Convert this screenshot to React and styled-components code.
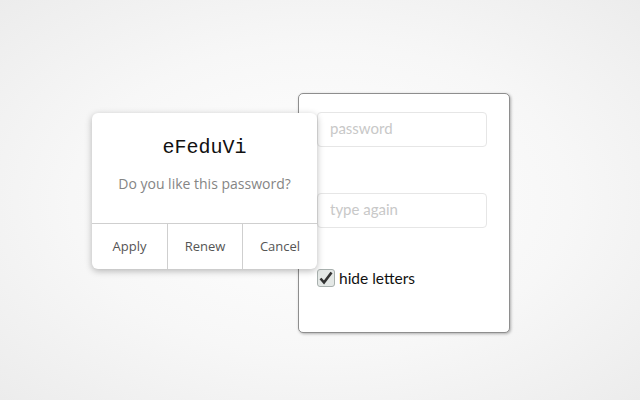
import React from "react";
import styled, { createGlobalStyle } from "styled-components";

const Global = createGlobalStyle`
  html, body { margin: 0; padding: 0; height: 100%; }
  body {
    background: radial-gradient(ellipse at 50% 50%, #ffffff 0%, #f7f7f7 55%, #ececec 100%);
    font-family: "Open Sans", sans-serif;
  }
`;

const Stage = styled.div`
  width: 640px;
  height: 400px;
  box-sizing: border-box;
  padding: 93px 0 0 298px;
  display: flex;
  align-items: flex-start;
`;

const FormPanel = styled.div`
  position: relative;
  width: 212px;
  height: 240px;
  box-sizing: border-box;
  background: #fff;
  border: 1px solid #8e8e8e;
  border-radius: 5px;
  box-shadow: 1px 1px 3px rgba(0, 0, 0, 0.3);
  padding: 18px 0 0 18px;
  display: flex;
  flex-direction: column;
`;

const Field = styled.input`
  width: 170px;
  height: 35px;
  box-sizing: border-box;
  border: 1px solid #e6e6e6;
  border-radius: 4px;
  padding: 0 12px 3px;
  margin-bottom: ${(p) => p.$gap}px;
  font-family: Lato, sans-serif;
  font-size: 15px;
  color: #333;
  outline: none;
  &::placeholder { color: #c8c8c8; }
`;

const CheckRow = styled.label`
  display: flex;
  align-items: center;
  gap: 4px;
  font-family: Lato, sans-serif;
  font-size: 15.5px;
  line-height: 18px;
  color: #111;
`;

const CheckBox = styled.span`
  width: 18px;
  height: 18px;
  box-sizing: border-box;
  border: 1px solid #a8b0ae;
  border-radius: 3px;
  background: #e4e8e6;
  display: flex;
  align-items: center;
  justify-content: center;
`;

const Dialog = styled.div`
  position: absolute;
  left: -207px;
  top: 19px;
  width: 225px;
  height: 156px;
  box-sizing: border-box;
  background: #fff;
  border-radius: 6px;
  box-shadow: 0 2px 7px rgba(0, 0, 0, 0.28);
  display: flex;
  flex-direction: column;
  overflow: hidden;
`;

const Body = styled.div`
  flex: 1;
  display: flex;
  flex-direction: column;
  align-items: center;
  padding-top: 21px;
`;

const Title = styled.div`
  font-family: "Liberation Mono", monospace;
  font-size: 20px;
  color: #111;
  line-height: 28px;
`;

const Question = styled.div`
  margin-top: 12px;
  font-family: "Open Sans", sans-serif;
  font-size: 14px;
  color: #858585;
  line-height: 20px;
`;

const Actions = styled.div`
  height: 45px;
  border-top: 1px solid #cfcfcf;
  display: grid;
  grid-template-columns: 1fr 1fr 1fr;
`;

const Action = styled.button`
  border: none;
  background: transparent;
  border-left: ${(p) => (p.$first ? "none" : "1px solid #cfcfcf")};
  font-family: "Open Sans", sans-serif;
  font-size: 13px;
  color: #555;
  padding: 0 0 2px;
  cursor: pointer;
`;

export default function App() {
  return (
    <>
      <Global />
      <Stage>
        <FormPanel>
          <Field placeholder="password" $gap={46} />
          <Field placeholder="type again" $gap={41} />
          <CheckRow>
            <CheckBox>
              <svg width="14" height="14" viewBox="0 0 14 14">
                <path d="M1.5 7.5 L5 11.5 L12.5 1.5" fill="none" stroke="#333" strokeWidth="2.6" strokeLinejoin="miter" />
              </svg>
            </CheckBox>
            hide letters
          </CheckRow>
          <Dialog>
            <Body>
              <Title>eFeduVi</Title>
              <Question>Do you like this password?</Question>
            </Body>
            <Actions>
              <Action $first>Apply</Action>
              <Action>Renew</Action>
              <Action>Cancel</Action>
            </Actions>
          </Dialog>
        </FormPanel>
      </Stage>
    </>
  );
}
